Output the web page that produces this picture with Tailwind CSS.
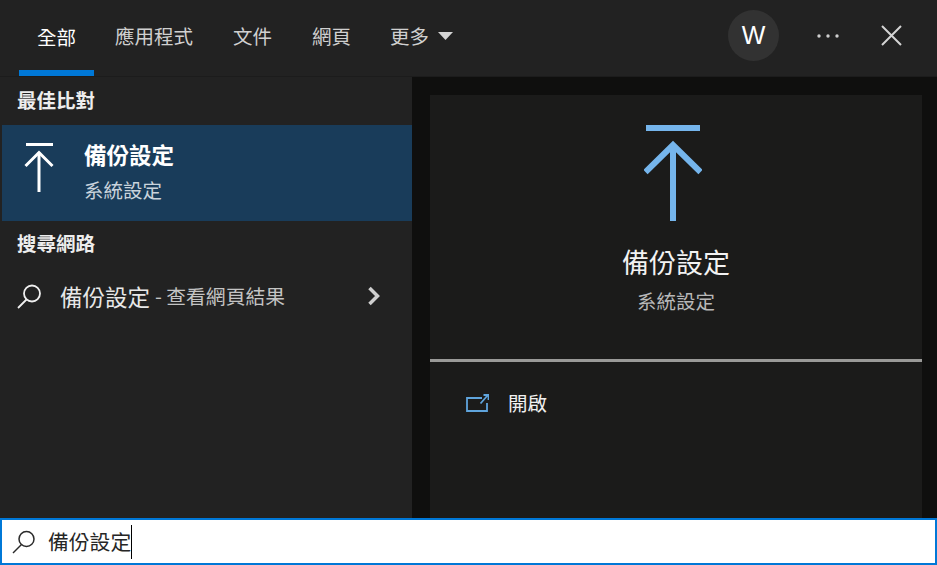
<!DOCTYPE html>
<html lang="zh-Hant">
<head>
<meta charset="utf-8">
<script src="https://cdn.jsdelivr.net/npm/@tailwindcss/browser@4"></script>
</head>
<body class="m-0 overflow-hidden">
<div class="w-[937px] h-[565px] flex flex-col bg-[#222222] font-['Noto_Sans_CJK_TC','Liberation_Sans',sans-serif]">
  <header class="h-[77px] flex items-stretch shrink-0 pl-[19px] pr-[35px] text-[19.5px] text-[#d0d0d0] border-b border-[#1c1c1c]">
    <div class="w-[75px] flex items-center justify-center text-white border-b-[6px] border-[#0078d7] pt-[3px]"><span class="leading-none">全部</span></div>
    <div class="ml-[21px] pb-[5px] flex items-center gap-[40px]">
      <span class="leading-none">應用程式</span>
      <span class="leading-none">文件</span>
      <span class="leading-none mr-[-1px]">網頁</span>
      <span class="flex items-center gap-[9px] leading-none">更多
        <svg width="15" height="8" viewBox="0 0 15 8"><path d="M0 0h15L7.500 8z" fill="#d4d4d4"/></svg>
      </span>
    </div>
    <div class="ml-auto pb-[5px] flex items-center">
      <div class="w-[51px] h-[51px] rounded-full bg-[#323232] flex items-center justify-center text-white text-[25px] font-['Liberation_Sans',sans-serif]">W</div>
      <svg class="ml-[38px]" width="22" height="4" viewBox="0 0 22 4" fill="#cfcfcf"><circle cx="2" cy="2" r="1.700"/><circle cx="11" cy="2" r="1.700"/><circle cx="20" cy="2" r="1.700"/></svg>
      <svg class="ml-[42px]" width="21" height="21" viewBox="0 0 21 21" stroke="#d4d4d4" stroke-width="2" fill="none"><path d="M1 1l19 19M20 1L1 20"/></svg>
    </div>
  </header>
  <main class="flex-1 flex min-h-0">
    <section class="w-[412px] shrink-0 flex flex-col">
      <h2 class="h-[48px] flex items-center pl-[17px] pb-[2px] text-[19.500px] font-bold text-[#ededed] leading-none">最佳比對</h2>
      <div class="ml-[2px] h-[96px] bg-[#193c5a] flex items-center text-white">
        <svg class="ml-[22px] mt-[-11px]" width="30" height="49" viewBox="0 0 30 49" fill="none" stroke="#fff" stroke-width="3"><path d="M2 1.500h27"/><path d="M1.500 23L15 9.500 28.500 23"/><path d="M15 9.500V49"/></svg>
        <div class="ml-[30px] mt-[-4px] flex flex-col">
          <span class="text-[22.500px] font-bold leading-none">備份設定</span>
          <span class="mt-[14px] text-[19.500px] text-[#c9d3dc] leading-none">系統設定</span>
        </div>
      </div>
      <h2 class="h-[48px] flex items-center pl-[17px] pb-[5px] text-[19.500px] font-bold text-[#ededed] leading-none">搜尋網路</h2>
      <div class="h-[54px] flex items-center pl-[17px] pr-[31px]">
        <svg width="25" height="25" viewBox="0 0 25 25" fill="none" stroke="#f0f0f0" stroke-width="1.800"><circle cx="15" cy="9.500" r="8"/><path d="M9.500 15.500L1 24"/></svg>
        <span class="ml-[18px] text-[22.500px] text-[#e8e8e8] leading-none">備份設定</span>
        <span class="ml-[5px] text-[19.800px] text-[#c4c4c4] leading-none">- 查看網頁結果</span>
        <svg class="ml-auto" width="14" height="20" viewBox="0 0 14 20" fill="none" stroke="#cfcfcf" stroke-width="3.500"><path d="M2.500 2l8 8-8 8"/></svg>
      </div>
    </section>
    <section class="flex-1 bg-[#0f0f0e] pt-[18px] pl-[18px] pr-[15px]">
      <div class="h-full bg-[#1b1b1a] flex flex-col">
        <div class="h-[267px] shrink-0 border-b-[3px] border-[#9a9a98] flex flex-col items-center">
          <svg class="mt-[30px] ml-[-7px]" width="58" height="96" viewBox="0 0 58 96" fill="none" stroke="#75b5ec" stroke-width="6"><path d="M2 3h54" /><path d="M1.500 47L29 20l27.500 27"/><path d="M29 20v76"/></svg>
          <span class="mt-[27px] text-[27px] text-[#f2f2f2] leading-none">備份設定</span>
          <span class="mt-[16px] text-[19.500px] text-[#b8b8b8] leading-none">系統設定</span>
        </div>
        <div class="flex items-center pl-[36px] pt-[31px]">
          <svg width="23" height="18" viewBox="0 0 23 18" fill="none" stroke="#5fa4dc" stroke-width="1.800"><path d="M16 4H1v13h20V9"/><path d="M14.500 9.500L21.500 1.500M17.500 1h5v5"/></svg>
          <span class="ml-[19px] text-[19.500px] text-[#f0f0f0] leading-none">開啟</span>
        </div>
      </div>
    </section>
  </main>
  <div class="h-[47px] shrink-0 bg-white border-2 border-[#0078d7] flex items-center pl-[10px]">
    <svg width="24" height="24" viewBox="0 0 24 24" fill="none" stroke="#2a2a2a" stroke-width="1.500"><circle cx="14.500" cy="9" r="7.500"/><path d="M9.500 14.500L1 23"/></svg>
    <span class="ml-[12px] text-[20.800px] text-[#262626] leading-none">備份設定</span>
    <span class="w-px h-[34px] bg-black"></span>
  </div>
</div>
</body>
</html>
